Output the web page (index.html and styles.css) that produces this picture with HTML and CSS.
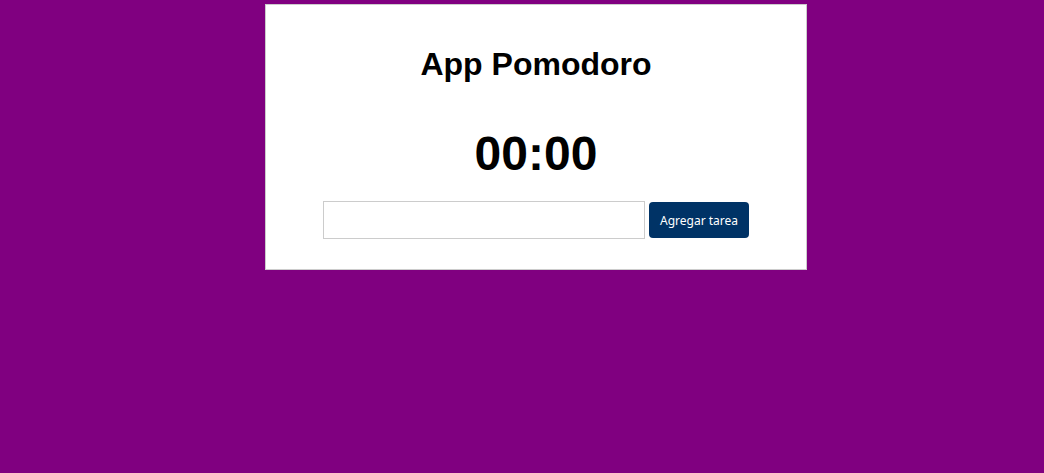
FILE: index.html
```html
<!DOCTYPE html>
<html lang="es">
<head>
<meta charset="utf-8">
<title>App Pomodoro</title>
<link rel="stylesheet" href="styles.css">
</head>
<body>
<div class="card">
  <h1 class="title">App Pomodoro</h1>
  <div class="timer">00:00</div>
  <div class="row">
    <input class="task-input" type="text">
    <button class="add-btn">Agregar tarea</button>
  </div>
</div>
</body>
</html>
```
FILE: styles.css
```css
html, body {
  margin: 0;
  padding: 0;
}
body {
  background: #800080;
  font-family: "Liberation Sans", Arial, sans-serif;
  height: 473px;
  overflow: hidden;
}
.card {
  box-sizing: border-box;
  width: 542px;
  margin: 4px 0 0 265px;
  padding: 20px;
  background: #fff;
  border: 1px solid #ccc;
  display: flex;
  flex-direction: column;
  align-items: center;
}
.title {
  font-size: 32px;
  font-weight: bold;
  line-height: 37px;
  margin: 21px 0 0;
  color: #000;
}
.timer {
  font-size: 48px;
  font-weight: bold;
  line-height: 55px;
  margin-top: 43px;
  color: #000;
}
.row {
  display: flex;
  align-items: center;
  gap: 4px;
  margin-top: 20px;
  margin-bottom: 10px;
}
.task-input {
  box-sizing: border-box;
  width: 322px;
  height: 38px;
  border: 1px solid #ccc;
  padding: 0 8px;
  margin: 0;
  font-family: "Noto Sans", sans-serif;
  font-size: 13px;
}
.add-btn {
  box-sizing: border-box;
  width: 100px;
  height: 36px;
  border: none;
  border-radius: 4px;
  background: #003366;
  color: #fff;
  font-family: "Noto Sans", sans-serif;
  font-size: 12px;
  padding: 0;
  margin: 0;
}
```
